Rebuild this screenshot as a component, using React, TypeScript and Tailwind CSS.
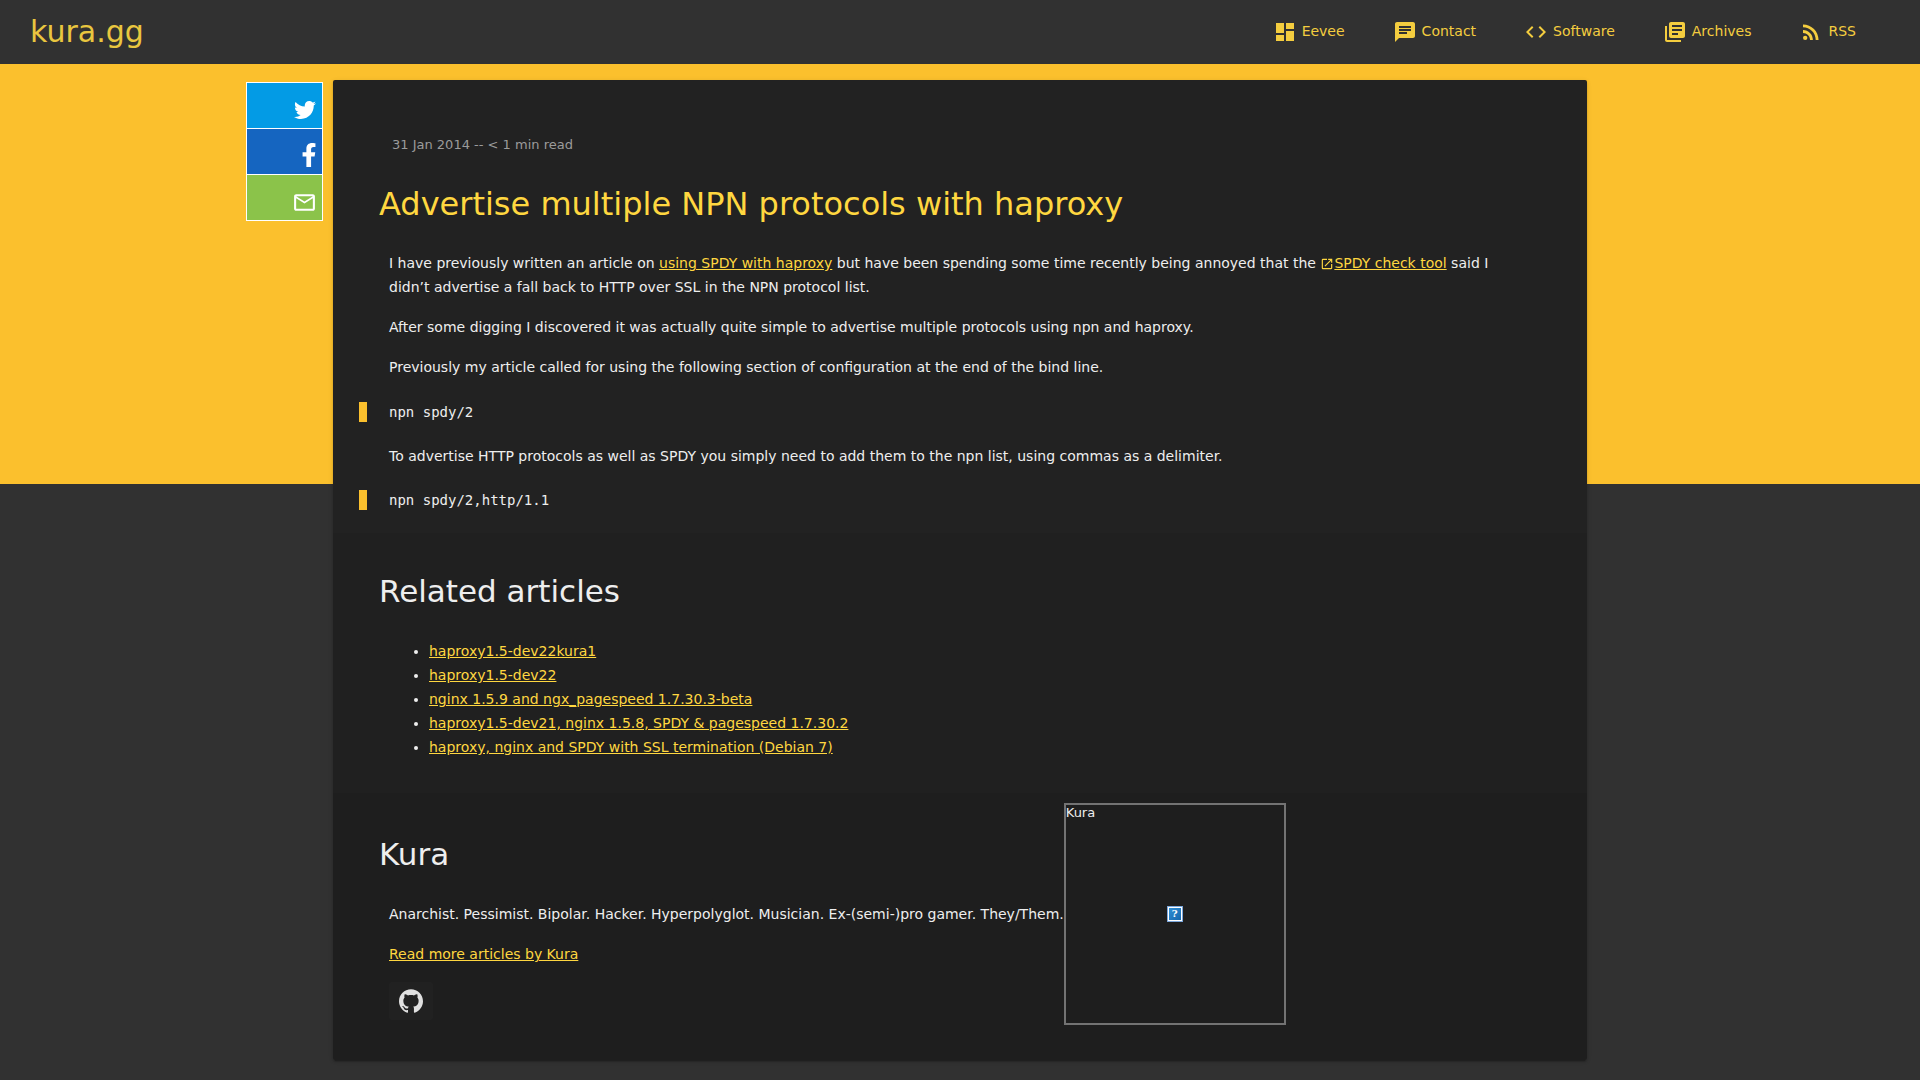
import type { ReactNode } from "react";
import {
  MdChat,
  MdCode,
  MdDashboard,
  MdLibraryBooks,
  MdOpenInNew,
  MdOutlineEmail,
  MdRssFeed,
} from "react-icons/md";
import { FaFacebookF, FaTwitter } from "react-icons/fa";
import { SiGithub } from "react-icons/si";

const navItems = [
  { label: "Eevee", icon: MdDashboard },
  { label: "Contact", icon: MdChat },
  { label: "Software", icon: MdCode },
  { label: "Archives", icon: MdLibraryBooks },
  { label: "RSS", icon: MdRssFeed },
];

const related = [
  "haproxy1.5-dev22kura1",
  "haproxy1.5-dev22",
  "nginx 1.5.9 and ngx_pagespeed 1.7.30.3-beta",
  "haproxy1.5-dev21, nginx 1.5.8, SPDY & pagespeed 1.7.30.2",
  "haproxy, nginx and SPDY with SSL termination (Debian 7)",
];

function TextLink({ children }: { children: ReactNode }) {
  return (
    <a href="#" className="text-[#ffd740] underline">
      {children}
    </a>
  );
}

function CodeBlock({ children }: { children: string }) {
  return (
    <pre className="-ml-[30px] border-l-8 border-[#fbc02d] pl-[22px] font-['DejaVu_Sans_Mono',monospace] leading-5">
      {children}
    </pre>
  );
}

function Header() {
  return (
    <header className="flex h-16 items-center justify-between bg-[#313131] pl-[30px] pr-10 text-[#f4cd3f]">
      <a href="#" className="text-[30px] leading-10 text-[#e9c63f]">
        kura.gg
      </a>
      <nav className="flex">
        {navItems.map(({ label, icon: Icon }) => (
          <a key={label} href="#" className="flex items-center gap-[5px] px-6 leading-6">
            <Icon size={24} />
            <span className="pb-0.5">{label}</span>
          </a>
        ))}
      </nav>
    </header>
  );
}

function ShareBar() {
  return (
    <div className="mr-2.5 mt-0.5 flex w-[77px] flex-col divide-y divide-white border border-white text-white">
      <a href="#" aria-label="Share on Twitter" className="flex h-[46px] items-end justify-end bg-[#039be5] pb-[7px] pr-1.5">
        <FaTwitter size={22} />
      </a>
      <a href="#" aria-label="Share on Facebook" className="flex h-[46px] items-end justify-end bg-[#1565c0] pb-[7px] pr-1">
        <FaFacebookF size={24} className="w-[18px]" />
      </a>
      <a href="#" aria-label="Share by email" className="flex h-[45px] items-end justify-end bg-[#8bc34a] pb-[5px] pr-[5px]">
        <MdOutlineEmail size={25} />
      </a>
    </div>
  );
}

function Avatar() {
  return (
    <div
      role="img"
      aria-label="Kura"
      className="relative flex size-[222px] shrink-0 items-center justify-center border-2 border-[#737373]"
    >
      <span className="absolute left-0 top-0 text-[13px] leading-4">Kura</span>
      <span className="flex size-4 items-center justify-center border border-[#7ba7dc] bg-white p-px">
        <span className="flex size-3 items-center justify-center bg-linear-to-br from-[#2f8fd6] to-[#1767ac] font-['DejaVu_Serif',serif] text-[10px] font-bold leading-3 text-white">
          ?
        </span>
      </span>
    </div>
  );
}

export default function App() {
  return (
    <div className="min-h-screen bg-[#313131] font-['DejaVu_Sans',sans-serif] text-sm leading-6 text-[#eeeeee]">
      <Header />
      <div className="bg-[linear-gradient(#fbc02d_420px,transparent_420px)] pb-5 pt-4">
        <div className="flex items-start">
          <aside className="flex flex-1 justify-end">
            <ShareBar />
          </aside>
          <main className="w-[calc(66.667%-26px)] overflow-hidden rounded-xs shadow-[0_2px_2px_rgba(0,0,0,0.14),0_3px_1px_-2px_rgba(0,0,0,0.2),0_1px_5px_rgba(0,0,0,0.12)]">
            <article className="bg-[#222222] px-14 pb-[23px] pt-[53px]">
              <p className="pl-[3px] text-[13px] text-[#9b9b9b]">31 Jan 2014 -- &lt; 1 min read</p>
              <h1 className="-ml-2.5 mb-6 mt-6 text-[32px] leading-[46px] text-[#ffd740]">
                Advertise multiple NPN protocols with haproxy
              </h1>
              <div className="flex flex-col gap-4">
                <p>
                  I have previously written an article on <TextLink>using SPDY with haproxy</TextLink> but have been
                  spending some time recently being annoyed that the{" "}
                  <MdOpenInNew size={14} className="inline text-[#ffd740]" />
                  <TextLink>SPDY check tool</TextLink> said I didn’t advertise a fall back to HTTP over SSL in the NPN
                  protocol list.
                </p>
                <p>
                  After some digging I discovered it was actually quite simple to advertise multiple protocols using npn
                  and haproxy.
                </p>
                <p>Previously my article called for using the following section of configuration at the end of the bind line.</p>
              </div>
              <div className="mt-[23px] flex flex-col gap-[22px]">
                <CodeBlock>npn spdy/2</CodeBlock>
                <p>
                  To advertise HTTP protocols as well as SPDY you simply need to add them to the npn list, using commas
                  as a delimiter.
                </p>
                <CodeBlock>npn spdy/2,http/1.1</CodeBlock>
              </div>
            </article>

            <section className="bg-[#202020] px-14 pb-[34px] pt-9">
              <h2 className="-ml-2.5 mb-[26px] text-[31px] leading-[44px]">Related articles</h2>
              <ul className="list-disc pl-10">
                {related.map((title) => (
                  <li key={title}>
                    <TextLink>{title}</TextLink>
                  </li>
                ))}
              </ul>
            </section>

            <section className="flex items-start bg-[#1e1e1e] px-14 pb-[35px] pt-2.5">
              <div className="flex flex-col items-start pt-[29px]">
                <h2 className="-ml-2.5 mb-[26px] text-[31px] leading-[44px]">Kura</h2>
                <p className="mb-4">
                  Anarchist. Pessimist. Bipolar. Hacker. Hyperpolyglot. Musician. Ex-(semi-)pro gamer. They/Them.
                </p>
                <p className="mb-4">
                  <TextLink>Read more articles by Kura</TextLink>
                </p>
                <a
                  href="#"
                  aria-label="GitHub"
                  className="flex h-[38px] w-11 items-center justify-center rounded-xs bg-[#212121] text-[#e0e0e0]"
                >
                  <SiGithub size={24} />
                </a>
              </div>
              <Avatar />
            </section>
          </main>
          <div className="flex-1" />
        </div>
      </div>
    </div>
  );
}
